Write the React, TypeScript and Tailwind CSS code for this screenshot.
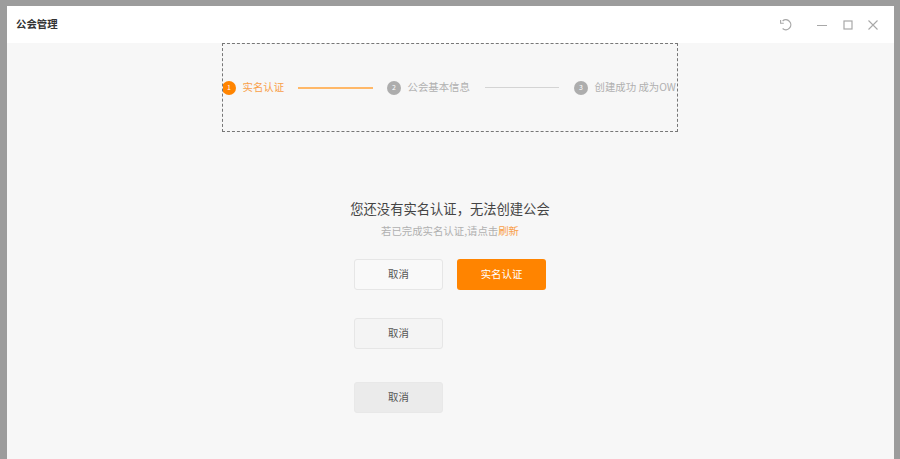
import React from "react";

const FONT = "[font-family:'Noto_Sans_CJK_SC','Liberation_Sans',sans-serif]";

function Step({ n, label, active, w }: { n: number; label: string; active?: boolean; w: string }) {
  return (
    <div className={`flex items-center shrink-0 ${w}`}>
      <span
        className={`flex h-[14px] w-[14px] shrink-0 items-center justify-center rounded-full text-[7px] leading-none text-white ${
          active ? "bg-[#ff8400]" : "bg-[#adadad]"
        }`}
      >
        {n}
      </span>
      <span className={`ml-[6.5px] whitespace-nowrap text-[10.4px] leading-none ${active ? "text-[#f9a04a]" : "text-[#b0b0b0]"}`}>
        {label}
      </span>
    </div>
  );
}

function Btn({ className, label }: { className: string; label: string }) {
  return (
    <button className={`flex h-[31px] w-[89px] items-center justify-center rounded-[3px] text-[10.4px] leading-none ${className}`}>
      {label}
    </button>
  );
}

export default function App() {
  return (
    <div className={`flex h-[459px] w-[900px] flex-col overflow-hidden bg-[#9c9c9c] pl-[7px] pr-[6px] pt-[6px] ${FONT}`}>
      <div className="flex h-[453px] flex-col bg-[#f7f7f7]">
        <header className="flex h-[37px] shrink-0 items-center justify-between bg-white pl-[9px] pr-[16px]">
          <h1 className="text-[10.4px] font-bold leading-none text-[#333]">公会管理</h1>
          <div className="flex items-center text-[#a8a8a8]">
            <svg width="14" height="14" viewBox="0 0 14 14" fill="none" stroke="currentColor" strokeWidth="1.3">
              <path d="M3.6 2.9 A5 5 0 1 1 3.6 10.6" />
              <path d="M1.6 2 V5.2 H4.8" strokeWidth="1.1" />
            </svg>
            <svg className="ml-[24px]" width="10" height="10" viewBox="0 0 10 10" fill="none" stroke="currentColor" strokeWidth="1">
              <path d="M0 5.5 H10" />
            </svg>
            <svg className="ml-[16px]" width="10" height="10" viewBox="0 0 10 10" fill="none" stroke="currentColor" strokeWidth="1.2">
              <rect x="1" y="1" width="8" height="8" />
            </svg>
            <svg className="ml-[15px]" width="10" height="10" viewBox="0 0 10 10" fill="none" stroke="currentColor" strokeWidth="1.1">
              <path d="M0.5 0.5 L9.5 9.5 M9.5 0.5 L0.5 9.5" />
            </svg>
          </div>
        </header>

        <main className="flex flex-1 flex-col items-center pr-px">
          <div className="flex h-[89px] w-[456px] shrink-0 items-center overflow-hidden border border-dashed border-[#777]">
            <Step n={1} label="实名认证" active w="w-[76px] -ml-px" />
            <div className="h-[2px] w-[75px] shrink-0 bg-[#ffb868]" />
            <div className="ml-[14px]">
              <Step n={2} label="公会基本信息" w="w-[98px]" />
            </div>
            <div className="h-px w-[74px] shrink-0 bg-[#d4d4d4]" />
            <div className="ml-[15px]">
              <Step n={3} label="创建成功 成为OW" w="w-[104px]" />
            </div>
          </div>

          <p className="mt-[68px] text-[13.3px] leading-[18px] text-[#444]">您还没有实名认证，无法创建公会</p>
          <p className="mt-[6px] text-[10.4px] leading-[14px] text-[#b0b0b0]">
            若已完成实名认证,请点击<span className="text-[#f9a04a]">刷新</span>
          </p>

          <div className="mt-[21px] flex flex-col items-start">
            <div className="flex gap-[14px]">
              <Btn className="border border-[#e6e6e6] bg-[#f9f9f9] text-[#555]" label="取消" />
              <Btn className="bg-[#ff8400] text-white" label="实名认证" />
            </div>
            <Btn className="mt-[28px] border border-[#e6e6e6] bg-[#f4f4f4] text-[#555]" label="取消" />
            <Btn className="mt-[33px] border border-[#e8e8e8] bg-[#ebebeb] text-[#555]" label="取消" />
          </div>
        </main>
      </div>
    </div>
  );
}
